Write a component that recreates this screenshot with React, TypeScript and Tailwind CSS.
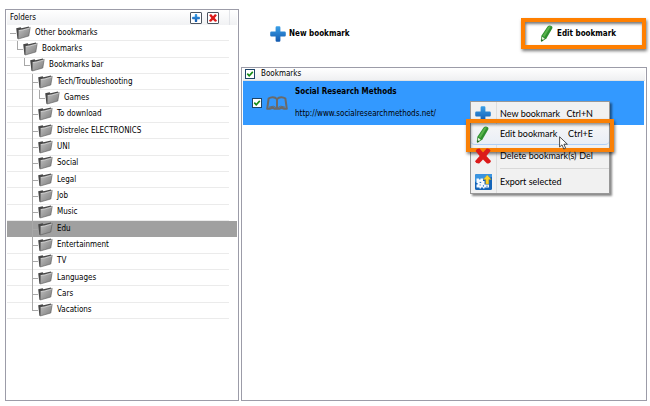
import React from "react";

type Folder = { name: string; level: number; last?: boolean; selected?: boolean; guide?: boolean };

const folders: Folder[] = [
  { name: "Other bookmarks", level: 0, last: true },
  { name: "Bookmarks", level: 1, last: true },
  { name: "Bookmarks bar", level: 2, last: true },
  { name: "Tech/Troubleshooting", level: 3 },
  { name: "Games", level: 4, last: true, guide: true },
  { name: "To download", level: 3 },
  { name: "Distrelec ELECTRONICS", level: 3 },
  { name: "UNI", level: 3 },
  { name: "Social", level: 3 },
  { name: "Legal", level: 3 },
  { name: "Job", level: 3 },
  { name: "Music", level: 3 },
  { name: "Edu", level: 3, selected: true },
  { name: "Entertainment", level: 3 },
  { name: "TV", level: 3 },
  { name: "Languages", level: 3 },
  { name: "Cars", level: 3 },
  { name: "Vacations", level: 3, last: true },
];

const indents = ["pl-[3px]", "pl-[10px]", "pl-[17px]", "pl-[25px]", "pl-[25px]"];

function FolderIcon() {
  return (
    <svg className="shrink-0" width="15" height="14" viewBox="0 0 15 14" aria-hidden="true">
      <defs>
        <linearGradient id="folderFace" x1="0" y1="0" x2="1" y2="1">
          <stop offset="0" stopColor="#c0c0c0" />
          <stop offset="1" stopColor="#7c7c7c" />
        </linearGradient>
      </defs>
      <path d="M0.2 2.2 L4.6 1.2 L5.4 2.2 L13 0.6 L13.2 2.6 L2 13 L1.4 12.4 Z" fill="#474747" />
      <path d="M2.4 4.2 L6.4 3.6 L14.2 1.4 L12.8 10 L2.2 13 Z" fill="url(#folderFace)" stroke="#5c5c5c" strokeWidth="0.6" />
      <path d="M2.8 4.6 L6.6 4 L13.8 2" fill="none" stroke="#e4e4e4" strokeWidth="0.7" />
    </svg>
  );
}

function PlusIcon({ size }: { size: number }) {
  return (
    <svg className="shrink-0" width={size} height={size} viewBox="0 0 16 16" aria-hidden="true">
      <defs>
        <linearGradient id="plusFill" x1="0" y1="0" x2="0" y2="1">
          <stop offset="0" stopColor="#3aa0e8" />
          <stop offset="1" stopColor="#1258ae" />
        </linearGradient>
      </defs>
      <path
        d="M6.8 0.2h2.4q1.2 0 1.2 1.2V5.6h4.2q1.2 0 1.2 1.2v2.4q0 1.2-1.2 1.2H10.4v4.2q0 1.2-1.2 1.2H6.8q-1.2 0-1.2-1.2V10.4H1.4q-1.2 0-1.2-1.2V6.8q0-1.2 1.2-1.2H5.6V1.4q0-1.2 1.2-1.2Z"
        fill="url(#plusFill)"
      />
    </svg>
  );
}

function CrossIcon({ size }: { size: number }) {
  return (
    <svg className="shrink-0" width={size} height={size} viewBox="0 0 16 16" aria-hidden="true">
      <path
        d="M0.6 3 Q1.6 0.4 4.6 0.6 L8 4.6 L11.6 0.6 Q14.4 0.2 15.6 2.8 L11.4 8 L16 13 Q15.2 15.6 12 15.6 L8 11.4 L4.2 15.6 Q0.8 15.8 0 13.2 L4.6 8 Z"
        fill="#dc1a1a"
      />
    </svg>
  );
}

function PencilIcon() {
  return (
    <svg className="shrink-0" width="16" height="17" viewBox="0 0 16 17" aria-hidden="true">
      <path d="M8.6 1.6 Q10.4 -0.2 12.8 1.3 Q13.8 2.2 13.2 3.6 L7.4 13.4 L3 16.6 Q1.8 16.8 1.8 15.6 L2.4 10.8 Z" fill="#2f8f2f" />
      <path d="M9.2 2 Q10.4 0.9 11.8 1.5 L5.4 12 L3.6 10.8 Z" fill="#58b44c" />
      <path d="M3 11.8 L5.7 13.5 L3.6 15.2 L2.7 14.7 Z" fill="#e6efdc" />
      <path d="M2.5 13.8 L4.2 15.4 L2.3 16.4 Z" fill="#1d5a1d" />
    </svg>
  );
}

function ExportIcon() {
  return (
    <svg className="shrink-0" width="17" height="16" viewBox="0 0 17 16" aria-hidden="true">
      <rect width="17" height="16" rx="1.5" fill="#1464b8" />
      <path d="M0 8V1.5Q0 0 1.5 0H17V3Z" fill="#3a94e0" />
      <path d="M1.5 4.5H4V5.5H5.5V4.5H8V7H9.5V10.5H14V13.5H9.5V14.5H8V13.5H6V14.5H4.5V13.5H1.5V10.5H2.6V9H1.5Z" fill="#f4f9ff" />
      <path d="M4.6 8.4H6.2M4.6 11H5.6M8.4 11.2V12.6M11.4 12.2H12.6" stroke="#1b6fc2" />
      <path d="M12.2 1L16.2 5.4H13.8V10H10.8V5.4H8.4Z" fill="#ffd42a" stroke="#c79a10" strokeWidth="0.4" />
    </svg>
  );
}

function BookIcon() {
  return (
    <svg className="shrink-0" width="22" height="15" viewBox="0 0 22 15" fill="none" stroke="#6a6a6a" strokeWidth="2" strokeLinejoin="round" aria-hidden="true">
      <path d="M11 3.2 Q9.4 1.2 6.8 1.2 Q4.2 1.2 2.6 2.6 L1.2 12.8 H4 Q6.4 11 8.6 12.8 H13.4 Q15.6 11 18 12.8 H20.8 L19.4 2.6 Q17.8 1.2 15.2 1.2 Q12.6 1.2 11 3.2 V12.8" />
      <path d="M3 11.2 Q7.6 8.8 11 12 Q14.4 8.8 19 11.2" strokeWidth="1" />
    </svg>
  );
}

function CheckBox({ id, label }: { id: string; label: string }) {
  return (
    <span className="relative flex size-[10px] shrink-0">
      <input
        id={id}
        type="checkbox"
        defaultChecked
        aria-label={label}
        className="peer size-[10px] appearance-none border border-[#1d4468] bg-white"
      />
      <svg className="pointer-events-none absolute inset-0 hidden peer-checked:block" width="10" height="10" viewBox="0 0 10 10" aria-hidden="true">
        <path d="M2.3 4.6 L4.2 6.7 L7.8 2.9" fill="none" stroke="#138a13" strokeWidth="1.6" />
      </svg>
    </span>
  );
}

function TreeRow({ folder }: { folder: Folder }) {
  return (
    <li className={folder.selected ? "flex bg-[#a0a0a0]" : "mr-2 flex border-b border-[#ebebeb]"}>
      <button type="button" className={`flex min-w-0 flex-1 items-center text-left ${indents[folder.level]}`}>
        {folder.guide && <span className="-mb-px w-[7px] self-stretch border-l border-[#a8a8a8]" />}
        <span className="-mb-px flex w-[6px] shrink-0 flex-col self-stretch">
          <span className={`flex-1 border-b border-[#a8a8a8] ${folder.level > 0 ? "border-l" : ""}`} />
          <span className={`flex-1 border-[#a8a8a8] ${folder.last ? "" : "border-l"}`} />
        </span>
        <FolderIcon />
        <span className="ml-1 leading-[14px] whitespace-nowrap">{folder.name}</span>
      </button>
    </li>
  );
}

function MenuItem({ icon, label, shortcut, active }: { icon: React.ReactNode; label: string; shortcut?: string; active?: boolean }) {
  return (
    <li role="none" className="relative">
      <button
        type="button"
        role="menuitem"
        className={`flex h-[21px] w-full items-center pr-4 pl-1 whitespace-nowrap ${
          active ? "rounded-sm border-b border-[#aecff7] bg-linear-to-b from-[#f6f6f7] to-[#e9eef6]" : ""
        }`}
      >
        <span className="flex w-[25px]">{icon}</span>
        <span className="flex-1 text-left">{label}</span>
        {shortcut && <span>{shortcut}</span>}
      </button>
      {active && (
        <>
          <span className="pointer-events-none absolute -inset-x-[5px] -top-[5px] -bottom-[7px] border-4 border-[#f98006] shadow-[1px_2px_3px_#0008,inset_1px_2px_3px_#0006]" />
          <svg className="pointer-events-none absolute top-3 left-[88px]" width="10" height="14" viewBox="0 0 10 14" aria-hidden="true">
            <path d="M0.6 0.8V11L3 8.8L4.8 13L6.6 12.2L4.9 8.2H8.4Z" fill="#fff" stroke="#222" strokeWidth="0.8" />
          </svg>
        </>
      )}
    </li>
  );
}

export default function App() {
  return (
    <div className="flex h-screen gap-[2px] bg-white pt-[9px] pr-[3px] pb-[5px] pl-[5px] font-['DejaVu_Sans_Condensed','DejaVu_Sans',sans-serif] text-[8px] text-black">
      <aside className="flex w-[234px] shrink-0 flex-col border border-[#9c9ca8] px-px">
        <header className="flex h-[15px] shrink-0 items-center bg-linear-to-b from-white to-[#f1f2f4] pl-[3px]">
          <h2 className="flex-1">Folders</h2>
          <button type="button" aria-label="Add folder" className="mr-[5px] flex size-3 items-center justify-center rounded-[1px] border border-[#4c5560] bg-white">
            <PlusIcon size={8} />
          </button>
          <button type="button" aria-label="Delete folder" className="mr-[10px] flex size-3 items-center justify-center rounded-[1px] border border-[#4c5560] bg-white">
            <CrossIcon size={8} />
          </button>
          <span className="w-2 self-stretch border-l border-[#e2e4e8]" />
        </header>
        <ul className="grid h-[294px] auto-rows-fr">
          {folders.map((folder) => (
            <TreeRow key={folder.name} folder={folder} />
          ))}
        </ul>
      </aside>

      <main className="flex min-w-0 flex-1 flex-col">
        <div className="flex h-[58px] shrink-0 items-start justify-between pt-[9px] pl-[29px] font-bold">
          <button type="button" className="flex h-[31px] items-center gap-[3px]">
            <PlusIcon size={16} />
            New bookmark
          </button>
          <button type="button" className="mr-px flex h-[31px] w-[125px] items-center border-4 border-[#ff7f00] pl-[14px] shadow-[1px_2px_3px_#0008,inset_1px_2px_3px_#0008]">
            <PencilIcon />
            <span className="ml-[2px]">Edit bookmark</span>
          </button>
        </div>

        <section className="flex-1 border border-[#9c9ca8] px-px">
          <header className="flex h-[13px] items-center gap-[6px] border-b border-[#e0e2e4] bg-linear-to-b from-white to-[#eff0f2] pl-[2px]">
            <CheckBox id="all" label="Select all bookmarks" />
            <label htmlFor="all">Bookmarks</label>
          </header>
          <div className="relative mr-px flex h-11 items-center bg-[#3399ff] pl-[9px]">
            <CheckBox id="bookmark" label="Social Research Methods" />
            <span className="ml-[4px]">
              <BookIcon />
            </span>
            <label htmlFor="bookmark" className="ml-[7px] flex flex-col gap-2 leading-[14px]">
              <strong>Social Research Methods</strong>
              <span>http://www.socialresearchmethods.net/</span>
            </label>

            <div className="absolute top-5 left-[227px] w-[140px] border border-[#979797] bg-[#f1f1f1] font-[Lato,'Open_Sans',sans-serif] text-[9px] shadow-[2px_2px_2px_#0007]">
              <span className="absolute inset-y-0 left-[25px] border-l border-[#dedede]" />
              <ul role="menu" className="relative py-px">
                <MenuItem icon={<PlusIcon size={16} />} label="New bookmark" shortcut="Ctrl+N" />
                <MenuItem icon={<PencilIcon />} label="Edit bookmark" shortcut="Ctrl+E" active />
                <MenuItem icon={<CrossIcon size={16} />} label="Delete bookmark(s)" shortcut="Del" />
                <li role="separator" className="mt-[2px] mb-[2px] ml-[29px] border-t border-[#d8d8d8]" />
                <MenuItem icon={<ExportIcon />} label="Export selected" />
              </ul>
            </div>
          </div>
        </section>
      </main>
    </div>
  );
}
